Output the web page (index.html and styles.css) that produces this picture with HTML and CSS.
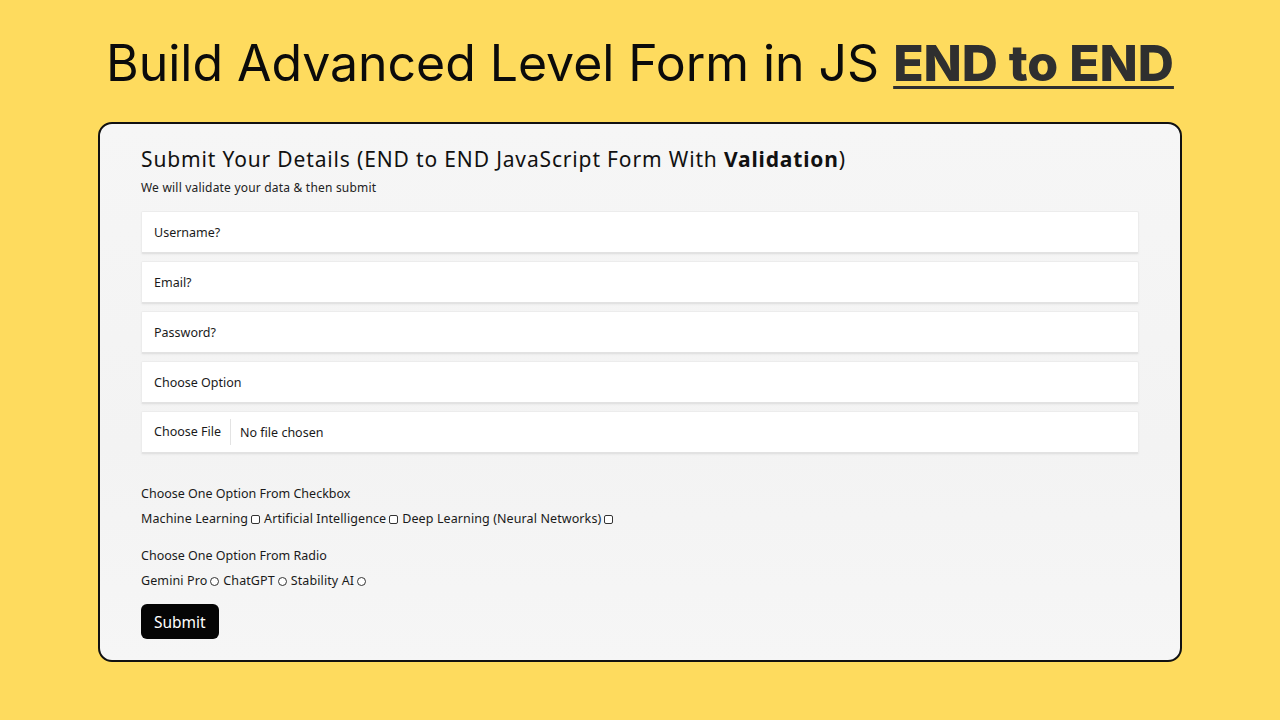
FILE: index.html
```html
<!DOCTYPE html>
<html lang="en">
<head>
<meta charset="utf-8">
<title>Build Advanced Level Form in JS</title>
<link rel="stylesheet" href="styles.css">
</head>
<body>
<div class="page">
  <h1 class="title">Build Advanced Level Form in JS <span class="title-strong">END to END</span></h1>
  <form class="card">
    <h2 class="card-title">Submit Your Details (END to END JavaScript Form With <b>Validation</b>)</h2>
    <p class="card-sub">We will validate your data &amp; then submit</p>
    <div class="fields">
      <input class="field" type="text" placeholder="Username?">
      <input class="field" type="email" placeholder="Email?">
      <input class="field" type="password" placeholder="Password?">
      <select class="field select"><option>Choose Option</option></select>
      <label class="field file"><span class="file-btn">Choose File</span><span class="file-name">No file chosen</span></label>
    </div>
    <p class="group-label first">Choose One Option From Checkbox</p>
    <div class="opts">
      <label class="opt">Machine Learning <input type="checkbox" class="box"></label>
      <label class="opt">Artificial Intelligence <input type="checkbox" class="box"></label>
      <label class="opt">Deep Learning (Neural Networks) <input type="checkbox" class="box"></label>
    </div>
    <p class="group-label">Choose One Option From Radio</p>
    <div class="opts">
      <label class="opt">Gemini Pro <input type="radio" name="ai" class="box round"></label>
      <label class="opt">ChatGPT <input type="radio" name="ai" class="box round"></label>
      <label class="opt">Stability AI <input type="radio" name="ai" class="box round"></label>
    </div>
    <button type="button" class="submit">Submit</button>
  </form>
</div>
</body>
</html>
```
FILE: styles.css
```css
* { box-sizing: border-box; }
html, body { margin: 0; padding: 0; }
body {
  background: #fedb5e;
  font-family: "Noto Sans", Lato, sans-serif;
  color: #111;
  width: 1280px;
  height: 720px;
  overflow: hidden;
}
.page {
  display: flex;
  flex-direction: column;
  align-items: center;
  padding-top: 33px;
}
.title {
  margin: 0;
  font-family: Inter, "Liberation Sans", sans-serif;
  font-weight: 400;
  font-size: 50px;
  line-height: 60px;
  letter-spacing: -0.05px;
  color: #0b0b0b;
}
.title-strong {
  font-weight: 800;
  color: #2f2f2f;
  text-decoration: underline;
  text-decoration-thickness: 3px;
  text-underline-offset: 5px;
}
.card {
  margin-top: 29px;
  width: 1084px;
  height: 540px;
  border: 2px solid #111;
  border-radius: 14px;
  background: linear-gradient(180deg, #f6f6f6 0%, #f3f3f3 60%, #f6f6f6 100%);
  padding: 22px 41px 0;
  display: flex;
  flex-direction: column;
  align-items: flex-start;
}
.card-title {
  margin: 0;
  font-size: 21px;
  line-height: 26px;
  font-weight: 400;
  color: #111;
  letter-spacing: 0.85px;
}
.card-title b { font-weight: 700; }
.card-sub {
  margin: 8px 0 0;
  font-size: 12px;
  line-height: 16px;
  color: #222;
  letter-spacing: 0.2px;
}
.fields {
  margin-top: 15px;
  width: 100%;
  display: flex;
  flex-direction: column;
  gap: 7px;
}
.field {
  display: flex;
  align-items: center;
  width: 100%;
  height: 43px;
  margin: 0;
  padding: 0 12px;
  border: 1px solid #ececec;
  border-bottom: 2px solid #e2e2e2;
  border-radius: 2px;
  background: #fff;
  font-family: "Noto Sans", Lato, sans-serif;
  font-size: 12.5px;
  color: #1a1a1a;
  outline: none;
  box-shadow: 0 1px 2px rgba(0,0,0,0.04);
}
.field::placeholder { color: #1a1a1a; opacity: 1; }
.select { appearance: none; -webkit-appearance: none; }
.file { cursor: pointer; }
.file-btn {
  padding-right: 9px;
  border-right: 1px solid #e3e3e3;
  line-height: 26px;
}
.file-name { padding-left: 9px; }
.group-label {
  margin: 21px 0 0;
  font-size: 12.5px;
  line-height: 16px;
  color: #1a1a1a;
}
.group-label.first { margin-top: 32px; }
.opts {
  margin-top: 9px;
  display: flex;
  gap: 4px;
  font-size: 12.5px;
  line-height: 16px;
  color: #1a1a1a;
  letter-spacing: 0.1px;
}
.opt { display: inline-flex; align-items: center; gap: 3px; }
.box {
  appearance: none;
  -webkit-appearance: none;
  margin: 0;
  width: 9px;
  height: 9px;
  border: 1px solid #333;
  border-radius: 2px;
  background: #fff;
}
.box.round { border-radius: 50%; }
.submit {
  margin-top: 15px;
  height: 35px;
  padding: 0 13px;
  border: none;
  border-radius: 6px;
  background: #050505;
  color: #fff;
  font-family: "Noto Sans", Lato, sans-serif;
  font-size: 15.5px;
  cursor: pointer;
}
```
